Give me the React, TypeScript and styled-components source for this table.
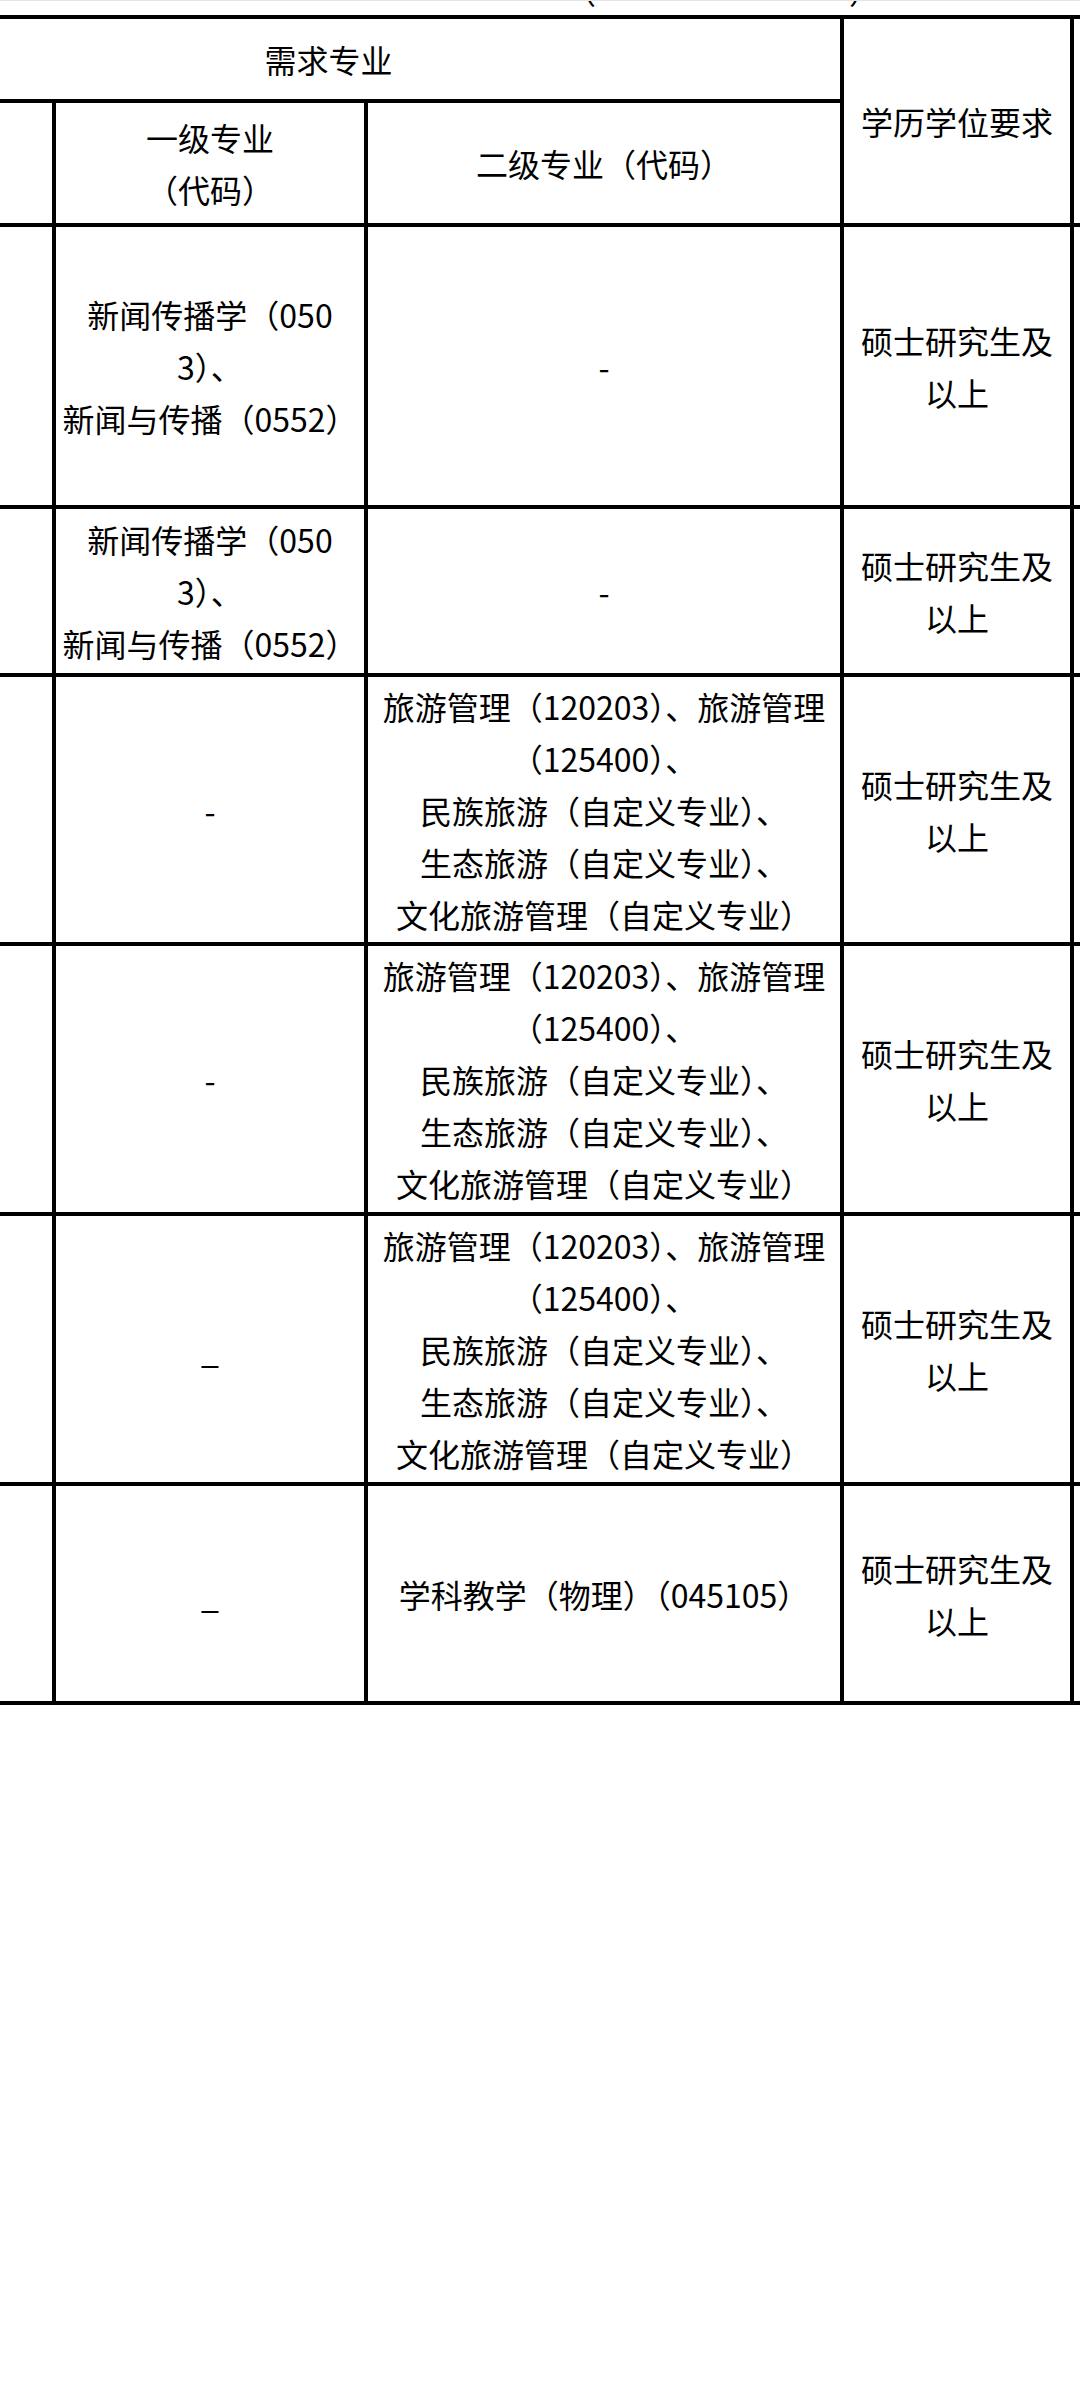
import React from 'react'
import styled, { createGlobalStyle } from 'styled-components'

const GlobalStyle = createGlobalStyle`
  html, body {
    margin: 0;
    padding: 0;
    background: #fff;
  }
  body {
    font-family: "Noto Sans CJK SC", "Noto Sans", sans-serif;
    color: #000;
  }
`

const columns = [239, 312, 476, 230, 200]
const tableWidth = columns.reduce((a, b) => a + b, 0)

const Page = styled.div`
  width: 1080px;
  min-height: 2388px;
  overflow: hidden;
  box-sizing: border-box;
  border-top: 1px solid #e4e4e4;
`

// the bottom of the title line above the table, mostly scrolled away
const Caption = styled.div`
  display: flex;
  height: 14px;
  overflow: hidden;
  padding-left: 564px;
  gap: 253px;
  font-size: 32px;
  line-height: 32px;
`

const Paren = styled.span`
  margin-top: -27px;
`

const Table = styled.table`
  border-collapse: collapse;
  table-layout: fixed;
  width: ${tableWidth}px;
  margin-left: -187px;
  font-size: 32px;
  line-height: 52px;
`

const Row = styled.tr<{ $h: number }>`
  height: ${p => p.$h}px;
`

const Cell = styled.td`
  border: 4px solid #000;
  padding: 0 4px;
  text-align: center;
  vertical-align: middle;
  font-weight: 400;
  word-break: break-all;
`

const Head = styled(Cell).attrs({ as: 'th' })``

const news = (
  <>
    新闻传播学（0503）、<br />新闻与传播（0552）
  </>
)

const tourism = (
  <>
    旅游管理（120203）、旅游管理（125400）、<br />
    民族旅游（自定义专业）、<br />
    生态旅游（自定义专业）、<br />
    文化旅游管理（自定义专业）
  </>
)

const degree = '硕士研究生及以上'

type RowData = { h: number; first: React.ReactNode; second: React.ReactNode }

const rows: RowData[] = [
  { h: 282, first: news, second: '-' },
  { h: 168, first: news, second: '-' },
  { h: 269, first: '-', second: tourism },
  { h: 270, first: '-', second: tourism },
  { h: 270, first: '_', second: tourism },
  { h: 219, first: '_', second: '学科教学（物理）（045105）' },
]

export default function App() {
  return (
    <Page>
      <GlobalStyle />
      <Caption>
        <Paren>（</Paren>
        <Paren>）</Paren>
      </Caption>
      <Table>
        <colgroup>
          {columns.map((w, i) => (
            <col key={i} style={{ width: w }} />
          ))}
        </colgroup>
        <thead>
          <Row $h={84}>
            <Head colSpan={3}>需求专业</Head>
            <Head rowSpan={2}>学历学位要求</Head>
            <Head rowSpan={2}></Head>
          </Row>
          <Row $h={124}>
            <Head></Head>
            <Head>
              一级专业
              <br />
              （代码）
            </Head>
            <Head>二级专业（代码）</Head>
          </Row>
        </thead>
        <tbody>
          {rows.map((r, i) => (
            <Row key={i} $h={r.h}>
              <Cell></Cell>
              <Cell>{r.first}</Cell>
              <Cell>{r.second}</Cell>
              <Cell>{degree}</Cell>
              <Cell></Cell>
            </Row>
          ))}
        </tbody>
      </Table>
    </Page>
  )
}
